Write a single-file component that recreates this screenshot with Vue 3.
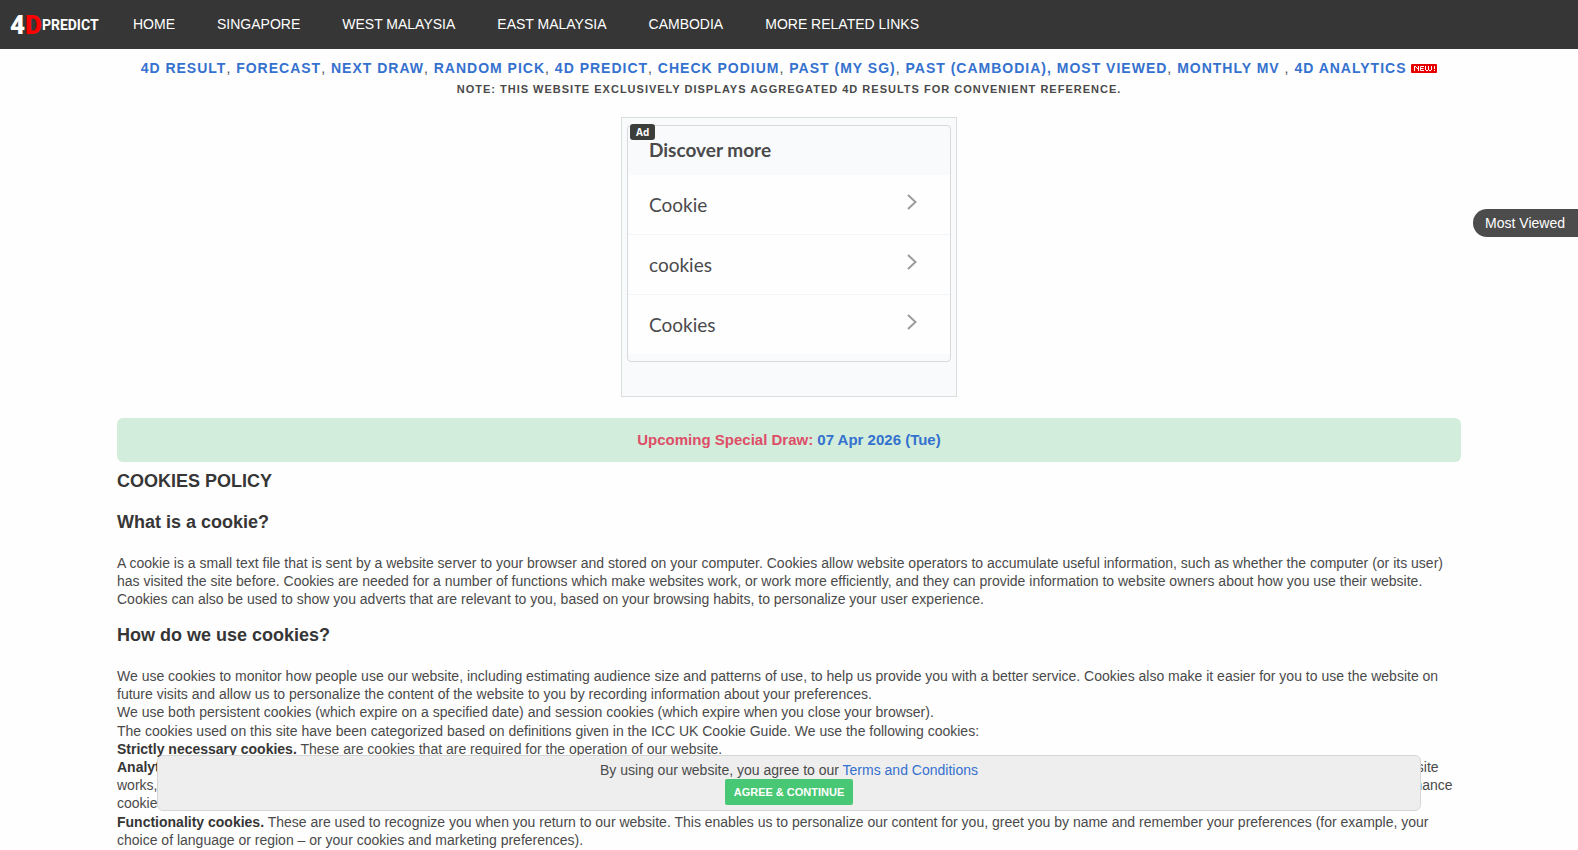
<script setup>
const navItems = ['HOME', 'SINGAPORE', 'WEST MALAYSIA', 'EAST MALAYSIA', 'CAMBODIA', 'MORE RELATED LINKS']

const quickLinks = [
  { label: '4D RESULT', after: ', ' },
  { label: 'FORECAST', after: ', ' },
  { label: 'NEXT DRAW', after: ', ' },
  { label: 'RANDOM PICK', after: ', ' },
  { label: '4D PREDICT', after: ', ' },
  { label: 'CHECK PODIUM', after: ', ' },
  { label: 'PAST (MY SG)', after: ', ' },
  { label: 'PAST (CAMBODIA),', after: ' ' },
  { label: 'MOST VIEWED', after: ', ' },
  { label: 'MONTHLY MV', after: ' , ' },
  { label: '4D ANALYTICS', after: ' ' }
]

const adItems = ['Cookie', 'cookies', 'Cookies']
</script>

<template>
  <div class="page">
    <header class="navbar">
      <a class="logo" href="#"><span class="logo-four">4</span><span class="logo-d">D</span><span class="logo-word">PREDICT</span></a>
      <nav class="menu">
        <a v-for="item in navItems" :key="item" href="#">{{ item }}</a>
      </nav>
    </header>

    <nav class="quick">
      <template v-for="link in quickLinks" :key="link.label"><a href="#">{{ link.label }}</a>{{ link.after }}</template>
      <svg class="new" width="26" height="9" viewBox="0 0 26 9" role="img" aria-label="New">
        <rect width="26" height="9" rx="1" fill="#e60000" />
        <g fill="none" stroke="#fff" stroke-width="1">
          <path d="M3.500 7V2M4 2.500H5M5 3.500H6M6 4.500H7M7.500 2V7" />
          <path d="M13 2.500H9.500V6.500H13M9.500 4.500H12.500" />
          <path d="M14.500 2V6M15 6.500H17M17.500 2V6M18 6.500H20M20.500 2V6" />
          <path d="M23.500 2V5M23.500 6V7" />
        </g>
      </svg>
    </nav>
    <p class="note">NOTE: THIS WEBSITE EXCLUSIVELY DISPLAYS AGGREGATED 4D RESULTS FOR CONVENIENT REFERENCE.</p>

    <aside class="ad">
      <span class="ad-badge">Ad</span>
      <div class="ad-card">
        <h2>Discover more</h2>
        <a v-for="item in adItems" :key="item" class="ad-row" href="#">
          <span>{{ item }}</span>
          <svg width="10" height="16" viewBox="0 0 10 16" aria-hidden="true">
            <path d="M1 1L8.500 8L1 15" fill="none" stroke="#9a9c9e" stroke-width="2" />
          </svg>
        </a>
      </div>
    </aside>

    <main class="content">
      <p class="banner">Upcoming Special Draw: <a href="#">07 Apr 2026 (Tue)</a></p>
      <h1>COOKIES POLICY</h1>
      <h2>What is a cookie?</h2>
      <div class="copy">
        <p>A cookie is a small text file that is sent by a website server to your browser and stored on your computer. Cookies allow website operators to accumulate useful information, such as whether the computer (or its user) has visited the site before. Cookies are needed for a number of functions which make websites work, or work more efficiently, and they can provide information to website owners about how you use their website. Cookies can also be used to show you adverts that are relevant to you, based on your browsing habits, to personalize your user experience.</p>
      </div>
      <h2>How do we use cookies?</h2>
      <div class="copy">
        <p>We use cookies to monitor how people use our website, including estimating audience size and patterns of use, to help us provide you with a better service. Cookies also make it easier for you to use the website on future visits and allow us to personalize the content of the website to you by recording information about your preferences.<br>We use both persistent cookies (which expire on a specified date) and session cookies (which expire when you close your browser).</p>
        <p>The cookies used on this site have been categorized based on definitions given in the ICC UK Cookie Guide. We use the following cookies:<br><strong>Strictly necessary cookies.</strong> These are cookies that are required for the operation of our website.<br><strong>Analytical/performance cookies.</strong> They allow us to recognise and count the number of visitors and to see how visitors move around our website when they are using it. This helps us to improve the way our website<br>works, for example, by ensuring that users are finding what they are looking for quickly. These cookies collect information that is aggregated and anonymous, and it is used solely to measure and improve performance<br>cookies may be assigned by third parties.</p>
        <p><strong>Functionality cookies.</strong> These are used to recognize you when you return to our website. This enables us to personalize our content for you, greet you by name and remember your preferences (for example, your choice of language or region – or your cookies and marketing preferences).</p>
      </div>
    </main>

    <button class="most-viewed" type="button">Most Viewed</button>

    <section class="consent">
      <p>By using our website, you agree to our <a href="#">Terms and Conditions</a></p>
      <button type="button">AGREE &amp; CONTINUE</button>
    </section>
  </div>
</template>

<style>
body {
  margin: 0;
  background: #fefefe;
}
</style>

<style scoped>
.page {
  height: 100vh;
  overflow: hidden;
  font-family: "Liberation Sans", Arial, sans-serif;
  font-size: 14px;
  line-height: 18px;
  color: #4a4a4a;
}
a {
  color: #3571ce;
  text-decoration: none;
}
p, h1, h2 {
  margin: 0;
}
.navbar {
  display: flex;
  align-items: center;
  box-sizing: border-box;
  height: 49px;
  padding-bottom: 2px;
  background: #363636;
}
.logo {
  display: flex;
  align-items: center;
  width: 112px;
  padding: 3px 0 0 10px;
  box-sizing: border-box;
  font-family: Roboto, "Liberation Sans", sans-serif;
  font-weight: 900;
  font-size: 26px;
  line-height: 32px;
  color: #fff;
}
.logo-d {
  color: #f00;
}
.logo-word {
  font-size: 14px;
  font-weight: 700;
}
.menu {
  display: flex;
}
.menu a {
  padding: 0 21px;
  color: #fff;
  white-space: nowrap;
}
.quick {
  margin-top: 10px;
  text-align: center;
  letter-spacing: 1px;
}
.quick a {
  font-weight: 700;
}
.note {
  margin-top: 3px;
  font-size: 11px;
  font-weight: 700;
  letter-spacing: 1px;
  text-align: center;
}
.ad {
  position: relative;
  box-sizing: border-box;
  width: 336px;
  height: 280px;
  margin: 19px auto 0;
  padding: 7px 5px;
  border: 1px solid #dadddd;
  background: #f8fafb;
  font-family: Lato, sans-serif;
}
.ad-badge {
  position: absolute;
  top: 6px;
  left: 8px;
  padding: 0 6px;
  border-radius: 3px;
  background: #3c3e3c;
  color: #fff;
  font: 700 10px/16px "Open Sans", sans-serif;
}
.ad-card {
  padding-bottom: 6px;
  border: 1px solid #d6dadc;
  border-radius: 4px;
}
.ad-card h2 {
  padding: 12px 21px 13px;
  font-size: 19px;
  line-height: 24px;
  font-weight: 700;
}
.ad-row {
  display: flex;
  align-items: center;
  justify-content: space-between;
  height: 59px;
  padding: 0 33px 0 21px;
  border-bottom: 1px solid #f3f6f7;
  background: #fefefe;
  color: #4a4a4c;
  font-size: 19px;
}
.ad-row:last-child {
  border-bottom-color: #f8fafb;
}
.ad-row svg {
  margin-bottom: 6px;
}
.content {
  max-width: 1344px;
  margin: 21px auto 0;
}
.banner {
  padding: 13px;
  border-radius: 6px;
  background: #d2eddb;
  color: #de4e68;
  text-align: center;
  font-size: 15px;
  font-weight: 700;
}
.content h1, .content h2 {
  font-size: 18px;
  line-height: 20px;
  color: #363636;
}
.content h1 {
  margin: 9px 0 21px;
}
.content h2 {
  margin-bottom: 22px;
}
.copy {
  display: flex;
  flex-direction: column;
  gap: 1px;
  margin-bottom: 17px;
}
strong {
  color: #363636;
}
.most-viewed {
  position: fixed;
  top: 209px;
  right: 0;
  height: 28px;
  padding: 0 13px 0 12px;
  border: 0;
  border-radius: 14px 0 0 14px;
  background: #4c4c4c;
  color: #fff;
  font: 14px/28px "Liberation Sans", Arial, sans-serif;
}
.consent {
  position: fixed;
  left: calc(10% - 1px);
  right: calc(10% - 1px);
  bottom: 39px;
  padding: 5px 0;
  border: 1px solid #d6d6d6;
  border-radius: 6px;
  background: #eee;
  text-align: center;
}
.consent button {
  display: block;
  margin: 0 auto;
  padding: 0 9px;
  border: 0;
  border-radius: 2px;
  background: #48c774;
  color: #fff;
  font: 700 11px/26px "Liberation Sans", Arial, sans-serif;
}
</style>
